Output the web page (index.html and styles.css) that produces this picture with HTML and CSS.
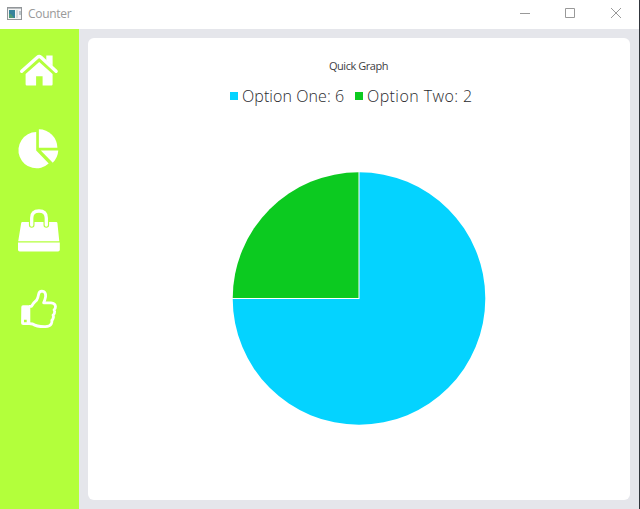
FILE: index.html
```html
<!DOCTYPE html>
<html lang="en">
<head>
<meta charset="utf-8">
<title>Counter</title>
<link rel="stylesheet" href="styles.css">
</head>
<body>
<div class="window">
  <header class="titlebar">
    <svg class="app-icon" viewBox="0 0 16 14">
      <rect x=".5" y=".5" width="14" height="12" fill="#f4f4f4" stroke="#929699"/>
      <path d="M1 1.5h13" stroke="#b9bdc0"/>
      <path d="M2 3h6v8H2z" fill="#35839b"/>
      <path d="M2 7h2l3 4H2z" fill="#4e9a78"/>
      <path d="M9 3h2v8H9z" fill="#d5dadc"/>
      <path d="M12 4h2v4h-2z" fill="#b8c4c8"/>
    </svg>
    <h1 class="title">Counter</h1>
    <div class="controls">
      <svg viewBox="0 0 46 28"><path d="M12 13.5h10"/></svg>
      <svg viewBox="0 0 46 28"><path d="M11.5 8.5h9v9h-9z"/></svg>
      <svg viewBox="0 0 46 28"><path d="M11 8l10 10M21 8L11 18"/></svg>
    </div>
  </header>
  <div class="body">
    <nav class="sidebar">
      <svg viewBox="0 30 79 80">
        <path d="M21.7 71.3L37.4 57.2q1.8-1.5 3.6 0l15.1 14.1" fill="none" stroke="#fff" stroke-width="3.4" stroke-linecap="round"/>
        <path d="M46.3 55.6h6.3v10.3l-6.3-5.7z"/>
        <path d="M39.2 62L52.6 74v10.3q0 1.2-1.2 1.2h-8.8v-9.2h-6.5v9.2h-9.3q-1.2 0-1.2-1.2V74z"/>
      </svg>
      <svg viewBox="0 110 79 80">
        <path d="M36.2 132.1A18.1 18.1 0 1 0 48.7 163.6L36.2 150.5z"/>
        <path d="M38.9 129.2A18.6 18.6 0 0 1 57.4 147.7H38.9z"/>
        <path d="M40.8 150.4h17.5q-.5 7-5.5 12.3z"/>
      </svg>
      <svg viewBox="0 190 79 80">
        <path d="M22.4 222h33.8q1.1 0 1.2 1l1.9 18.2H18.2L21.2 223q.1-1 1.2-1z"/>
        <path d="M18 242.6h41.8v7.2q0 1.7-1.7 1.7H19.7q-1.7 0-1.7-1.7z"/>
        <g fill="none" stroke-linecap="round">
          <path d="M31.7 225v-7q0-7 7.3-7t7.3 7v7" stroke="#b3ff3b" stroke-width="5.6"/>
          <path d="M31.7 225v-7q0-7 7.3-7t7.3 7v7" stroke="#fff" stroke-width="3.3"/>
        </g>
      </svg>
      <svg viewBox="0 270 79 80">
        <path fill-rule="evenodd" d="M23 305.2h5.5q1.8 0 1.8 1.6v16.7q0 1.6-1.8 1.6h-5q-2.5 0-2.4-2.5l.2-15.6q0-1.8 1.7-1.8zM24 319.8v2.5h2.7v-2.5z"/>
        <path d="M29 306.3h2.5q2.3-3.8 5.1-6.1 1.5-2.6 2.1-6.3.5-2.7 3.2-2.7 4.1.2 3.7 5.4-.4 2.8-2 6.2h7.4q4.3.2 4.5 3.9.1 2-1.5 3.1 1.1 1.4.5 3.1-.4 1.6-1.5 2.3.8 1.5.1 3.2-.5 1.3-1.3 2 .5 1.7-.5 3.5-1.4 2.7-5.9 2.8-8.7.2-12.8-2.7l-3.4-.4" fill="none" stroke="#fff" stroke-width="2.8" stroke-linejoin="round"/>
      </svg>
    </nav>
    <main class="content">
      <section class="card">
        <h2 class="chart-title">Quick Graph</h2>
        <ul class="legend">
          <li class="one"><span>Option One: 6</span></li>
          <li class="two"><span>Option Two: 2</span></li>
        </ul>
        <svg class="pie" viewBox="0 0 254 254">
          <path d="M127 126.5V.2A126.3 126.3 0 1 1 .7 126.5z" fill="#04d3ff"/>
          <path d="M127 126.5H.7A126.3 126.3 0 0 1 127 .2z" fill="#0cca20"/>
          <path d="M127 0v127M0 126.5h127" stroke="#fff"/>
        </svg>
      </section>
    </main>
  </div>
</div>
</body>
</html>
```
FILE: styles.css
```css
* { box-sizing: border-box; }
body { margin: 0; overflow: hidden; }
.window {
  display: flex;
  flex-direction: column;
  width: 640px;
  height: 509px;
  border-right: 1px solid #30353b;
  background: #fff;
  font-family: "Open Sans", sans-serif;
}
.titlebar {
  display: flex;
  align-items: center;
  height: 29px;
  padding-left: 7px;
}
.app-icon { width: 16px; height: 14px; margin-bottom: 2px; }
.title {
  margin: 0 0 1px 5px;
  color: #999;
  font-size: 12px;
  font-weight: 400;
  line-height: 18px;
  letter-spacing: -.3px;
}
.controls { display: flex; height: 28px; margin: 0 -7px 1px auto; }
.controls svg { width: 46px; height: 28px; fill: none; stroke: #999; }
.body { display: flex; flex: 1; background: #e5e6eb; }
.sidebar {
  display: flex;
  flex-direction: column;
  width: 79px;
  padding-top: 1px;
  background: #b3ff3b;
}
.sidebar svg { width: 79px; height: 80px; fill: #fff; }
.content { display: flex; flex: 1; padding: 9px; }
.card {
  display: flex;
  flex: 1;
  flex-direction: column;
  align-items: center;
  padding-top: 19px;
  border-radius: 6px;
  background: #fff;
  color: #404044;
}
.chart-title {
  margin: 0 0 0 -1px;
  font: 400 11px/18px "Open Sans", sans-serif;
  letter-spacing: -.45px;
}
.legend {
  display: flex;
  width: 244px;
  margin: 9px 0 0 -14px;
  padding: 0;
  list-style: none;
  color: #2a2a2e;
  font: 300 16px/24px "Open Sans", sans-serif;
}
.legend li { display: flex; align-items: center; gap: 4px; white-space: nowrap; }
.legend li::before { width: 8px; height: 8px; margin-top: -1px; content: ""; }
.legend .one { width: 125px; letter-spacing: .08px; }
.legend .two { letter-spacing: .42px; }
.one::before { background: #04d3ff; }
.two::before { background: #0cca20; }
.pie { width: 254px; height: 254px; margin-top: 64px; }
```
